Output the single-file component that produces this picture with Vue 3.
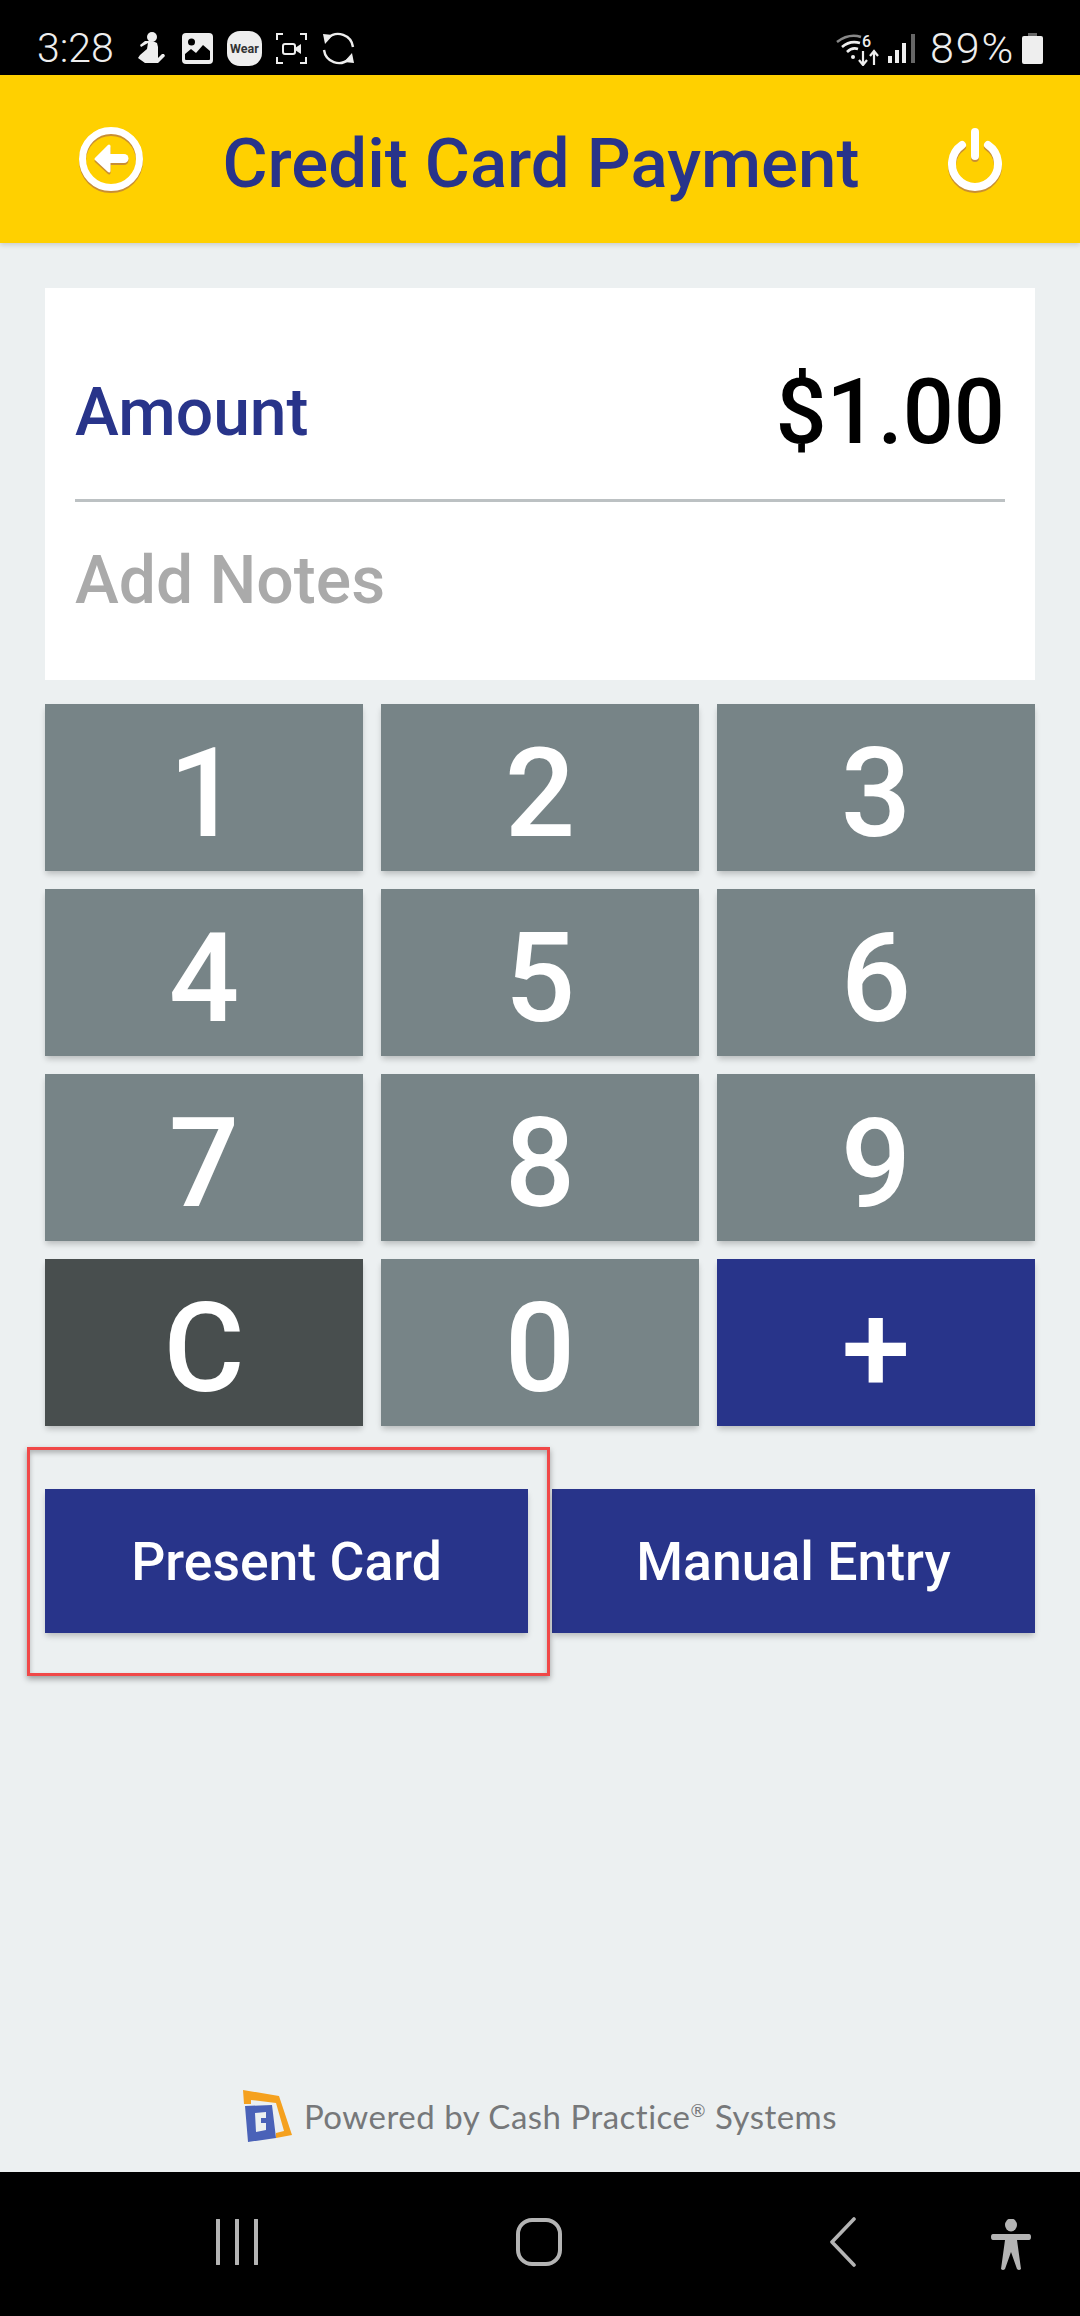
<script setup>
const keys = [
  { label: '1' }, { label: '2' }, { label: '3' },
  { label: '4' }, { label: '5' }, { label: '6' },
  { label: '7' }, { label: '8' }, { label: '9' },
  { label: 'C', kind: 'dark' }, { label: '0' }, { label: '+', kind: 'blue' }
]
</script>

<template>
  <div class="page">
    <div class="status">
      <div class="status-left">
        <span class="clock">3:28</span>
        <svg class="si si-person" width="29" height="32" viewBox="0 0 29 32">
          <circle cx="15" cy="5" r="5" fill="#eee"/>
          <path d="M8 9 L3 13 L4 15 L11 11 L10 17 L3 23 L1 26 L8 31 L21 31 L28 24 L27 22 L25 22 L21 26 L21 15 L20 11 Q17 9 13 9 Z" fill="#eee"/>
        </svg>
        <svg class="si si-image" width="31" height="31" viewBox="0 0 31 31">
          <rect width="31" height="31" rx="4" fill="#eee"/>
          <circle cx="9.5" cy="9" r="3.5" fill="#000"/>
          <path d="M3 26 V21 L9 16 L14 20 L21 12 L28 18 V26 Q28 27 27 27 H4 Q3 27 3 26 Z" fill="#000"/>
        </svg>
        <span class="wear">Wear</span>
        <svg class="si si-video" width="31" height="31" viewBox="0 0 31 31" fill="none" stroke="#eee" stroke-width="2">
          <path d="M1 7 V1 H7 M24 1 H30 V7 M30 24 V30 H24 M7 30 H1 V24"/>
          <rect x="7" y="11" width="12" height="10" rx="2"/>
          <path d="M19 15 L25 11 V21 L19 17 Z" fill="#eee" stroke="none"/>
        </svg>
        <svg width="33" height="33" viewBox="0 0 33 33" fill="none" stroke="#eee" stroke-width="2.4">
          <path d="M6 6 A15 15 0 0 1 31 15"/>
          <path d="M27 27 A15 15 0 0 1 2 18"/>
          <path d="M1 2 L11 3 L3 12 Z" fill="#eee" stroke="none"/>
          <path d="M32 31 L22 30 L30 21 Z" fill="#eee" stroke="none"/>
        </svg>
      </div>
      <div class="status-right">
        <svg class="wifi" width="43" height="36" viewBox="0 0 43 36" fill="none">
          <g transform="translate(0 4)">
            <path d="M1 8 Q13 -1 25 3" stroke="#888" stroke-width="2.6"/>
            <path d="M6 13 Q14 6 24 9" stroke="#eee" stroke-width="2.6"/>
            <path d="M11 18 Q16 13 22 15" stroke="#eee" stroke-width="2.6"/>
            <circle cx="17" cy="23" r="2" fill="#eee"/>
            <text x="26" y="13" class="six">6</text>
            <path d="M27 17 V30 M23 26 L27 31 L31 26 M38 31 V18 M34 22 L38 17 L42 22" stroke="#eee" stroke-width="2.2"/>
          </g>
        </svg>
        <svg class="signal" width="27" height="29" viewBox="0 0 27 29">
          <rect x="0" y="22" width="4" height="7" fill="#eee"/>
          <rect x="7" y="16" width="4" height="13" fill="#eee"/>
          <rect x="14" y="9" width="4" height="20" fill="#eee"/>
          <rect x="23" y="0" width="4" height="29" fill="#666"/>
        </svg>
        <span class="pct">89%</span>
        <svg width="21" height="31" viewBox="0 0 21 31">
          <path d="M6 0 H15 V3 H6 Z" fill="#666"/>
          <path d="M2 3 H19 Q21 3 21 5 V29 Q21 31 19 31 H2 Q0 31 0 29 V5 Q0 3 2 3 Z" fill="#eee"/>
        </svg>
      </div>
    </div>

    <header class="bar">
      <svg class="hicon" width="66" height="68" viewBox="0 0 66 68" fill="none">
        <circle cx="33" cy="33" r="28.5" stroke="#fff" stroke-width="7"/>
        <path d="M31 20 L18 33 L31 45 Z" fill="#fff" stroke="#fff" stroke-width="3" stroke-linejoin="round"/>
        <path d="M30 32.5 H46" stroke="#fff" stroke-width="9" stroke-linecap="round"/>
      </svg>
      <h1 class="title">Credit Card Payment</h1>
      <svg class="hicon" width="56" height="68" viewBox="0 0 56 68" fill="none">
        <path d="M15 19 A23 23 0 1 0 41 19" stroke="#fff" stroke-width="8" stroke-linecap="round"/>
        <path d="M28 6 V30" stroke="#fff" stroke-width="8" stroke-linecap="round"/>
      </svg>
    </header>

    <main class="main">
      <section class="card">
        <div class="amount-row">
          <span class="amount-label">Amount</span>
          <span class="amount-value">$1.00</span>
        </div>
        <div class="notes">Add Notes</div>
      </section>

      <div class="keypad">
        <button v-for="k in keys" :key="k.label" class="key" :class="k.kind">{{ k.label }}</button>
      </div>

      <div class="actions">
        <div class="action-wrap">
          <button class="action">Present Card</button>
          <div class="highlight"></div>
        </div>
        <button class="action">Manual Entry</button>
      </div>

      <footer class="powered">
        <svg width="49" height="52" viewBox="0 0 49 52">
          <path d="M0 0 L36 6 L49 45 L33 48 L33 43 L41 41 L33 13 L8 10 L8 14 L1 14 Z" fill="#f5a11f"/>
          <path d="M2 16 L29 15 L33 48 L5 52 Z M12 23 L13 42 L23 40 L23 33 L18 33 L18 28 L23 28 L23 22 Z" fill="#4a62b8" fill-rule="evenodd"/>
        </svg>
        <span class="powered-text">Powered by Cash Practice<sup>®</sup> Systems</span>
      </footer>
    </main>

    <nav class="nav">
      <svg class="nav-recents" width="42" height="46" viewBox="0 0 42 46">
        <path d="M2 1 V45 M21 1 V45 M40 1 V45" stroke="#b4b4b4" stroke-width="4" stroke-linecap="round"/>
      </svg>
      <svg class="nav-home" width="46" height="48" viewBox="0 0 46 48" fill="none">
        <rect x="2" y="2" width="42" height="44" rx="14" stroke="#b4b4b4" stroke-width="4"/>
      </svg>
      <svg class="nav-back" width="26" height="50" viewBox="0 0 26 50" fill="none">
        <path d="M24 2 L2 25 L24 48" stroke="#b4b4b4" stroke-width="3.6" stroke-linecap="round" stroke-linejoin="round"/>
      </svg>
      <svg class="nav-access" width="42" height="52" viewBox="0 0 42 52">
        <ellipse cx="21" cy="6" rx="6" ry="6.5" fill="#b4b4b4"/>
        <path d="M3 15 H39 Q41 15 41 18 Q41 21 39 21 H27 L31 50 Q29 52 27 50 L21 33 L15 50 Q13 52 11 50 L15 21 H3 Q1 21 1 18 Q1 15 3 15 Z" fill="#b4b4b4"/>
      </svg>
    </nav>
  </div>
</template>

<style>
html, body { margin: 0; background: #ecf0f1; }
</style>

<style scoped>
.page {
  width: 1080px;
  height: 2316px;
  display: flex;
  flex-direction: column;
  background: #ecf0f1;
  font-family: Roboto, "Liberation Sans", sans-serif;
  overflow: hidden;
}
.status {
  height: 75px;
  flex: none;
  background: #000;
  color: #eee;
  display: flex;
  justify-content: space-between;
  align-items: center;
  padding: 21px 37px 0 37px;
  box-sizing: border-box;
}
.status-left, .status-right { display: flex; align-items: center; }
.clock { font-size: 41px; font-weight: 300; width: 100px; line-height: 48px; }
.si { flex: none; }
.si-person { margin-right: 16px; }
.si-image { margin-right: 14px; }
.si-video { margin-right: 15px; }
.wear {
  width: 35px;
  height: 35px;
  margin-right: 14px;
  border-radius: 13px;
  background: #eee;
  color: #333;
  font-size: 12.5px;
  font-weight: 700;
  line-height: 35px;
  text-align: center;
}
.six { font-size: 16px; font-weight: 500; fill: #eee; font-family: Roboto, sans-serif; }
.signal { margin-left: 9px; }
.pct { font-size: 43px; font-weight: 300; margin-left: 15px; margin-right: 7px; line-height: 48px; letter-spacing: 1.8px; }
.bar {
  height: 168px;
  flex: none;
  background: #ffd000;
  box-shadow: 0 2px 5px rgba(0, 0, 0, 0.15);
  position: relative;
  display: flex;
  align-items: center;
  padding: 2px 77px 0 78px;
  box-sizing: border-box;
}
.hicon { flex: none; filter: drop-shadow(0 2px 0 rgba(190, 130, 60, 0.85)); }
.title {
  flex: 1;
  margin: 6px 9px 0 0;
  text-align: center;
  color: #28348a;
  font-size: 69px;
  font-weight: 500;
  line-height: 1;
}
.main {
  flex: 1;
  display: flex;
  flex-direction: column;
  padding: 45px 45px 0;
  min-height: 0;
}
.card {
  background: #fff;
  padding: 0 30px;
  height: 392px;
  box-sizing: border-box;
}
.amount-row {
  height: 214px;
  padding-top: 38px;
  box-sizing: border-box;
  border-bottom: 3px solid #bcc1c3;
  display: flex;
  justify-content: space-between;
  align-items: center;
}
.amount-label { color: #28348a; font-size: 66px; font-weight: 500; }
.amount-value { color: #000; font-size: 90px; font-weight: 500; }
.notes {
  color: #aaa;
  font-size: 66px;
  font-weight: 500;
  line-height: 157px;
}
.keypad {
  margin-top: 24px;
  display: grid;
  grid-template-columns: repeat(3, 1fr);
  grid-auto-rows: 167px;
  gap: 18px;
}
.key {
  border: 0;
  background: #778487;
  color: #fff;
  font-family: inherit;
  font-size: 124px;
  font-weight: 500;
  line-height: 1;
  padding: 12px 0 0;
  box-shadow: 0 4px 6px -1px rgba(0, 0, 0, 0.22);
}
.key.dark { background: #484e4e; }
.key.blue { background: #28348a; }
.actions {
  margin-top: 63px;
  display: grid;
  grid-template-columns: 483px 483px;
  justify-content: space-between;
}
.action-wrap { position: relative; display: flex; }
.action {
  width: 483px;
  height: 144px;
  border: 0;
  padding: 0;
  background: #28348a;
  color: #fff;
  font-family: inherit;
  font-size: 53.5px;
  font-weight: 500;
  box-shadow: 0 4px 6px -1px rgba(0, 0, 0, 0.22);
}
.highlight {
  position: absolute;
  left: -18px;
  top: -42px;
  width: 523px;
  height: 229px;
  box-sizing: border-box;
  border: 3px solid #f04848;
  box-shadow: 0 3px 6px rgba(0, 0, 0, 0.35), inset 0 3px 5px rgba(0, 0, 0, 0.25);
  pointer-events: none;
}
.powered {
  margin-top: auto;
  margin-bottom: 30px;
  display: flex;
  align-items: center;
  justify-content: center;
  gap: 12px;
}
.powered-text {
  color: #76787a;
  font-family: Lato, sans-serif;
  font-size: 33px;
  font-weight: 400;
  letter-spacing: 0.5px;
}
.powered-text sup { font-size: 18px; line-height: 0; }
.nav {
  height: 144px;
  flex: none;
  background: #000;
  position: relative;
  display: flex;
  align-items: center;
  padding-bottom: 4px;
  box-sizing: border-box;
}
.nav-recents { margin-left: 216px; }
.nav-home { margin-left: 258px; }
.nav-back { margin-left: 268px; }
.nav-access { margin-left: 134px; margin-top: 6px; }
</style>
